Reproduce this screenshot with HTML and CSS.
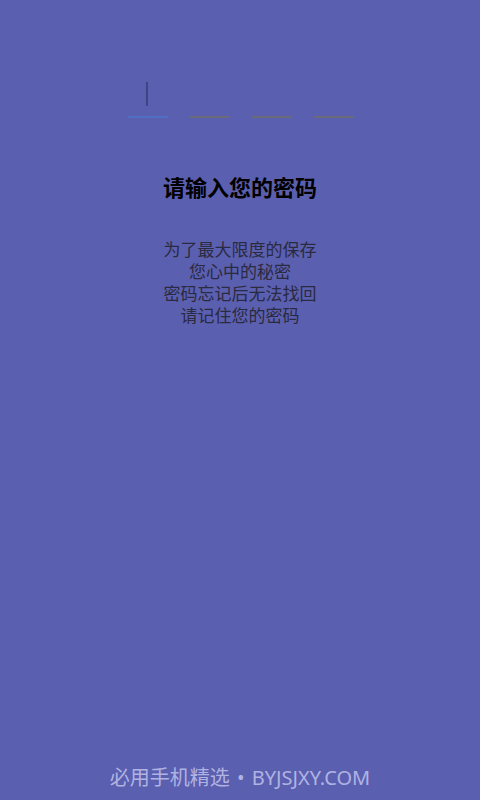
FILE: index.html
```html
<!DOCTYPE html>
<html lang="zh">
<head>
<meta charset="utf-8">
<link rel="stylesheet" href="styles.css">
</head>
<body>
<div class="screen">
  <div class="pin">
    <div class="slot active"><span class="cursor"></span></div>
    <div class="slot"></div>
    <div class="slot"></div>
    <div class="slot"></div>
  </div>
  <h1 class="title">请输入您的密码</h1>
  <div class="desc">
    <p>为了最大限度的保存</p>
    <p>您心中的秘密</p>
    <p>密码忘记后无法找回</p>
    <p>请记住您的密码</p>
  </div>
  <div class="spacer"></div>
  <div class="footer">必用手机精选 • BYJSJXY.COM</div>
</div>
</body>
</html>
```
FILE: styles.css
```css
html, body {
  margin: 0;
  padding: 0;
}
body {
  background: #5b5fb0;
  font-family: "Noto Sans CJK SC", "Noto Sans", sans-serif;
}
.screen {
  width: 480px;
  height: 800px;
  display: flex;
  flex-direction: column;
  align-items: center;
}
.pin {
  margin-top: 81px;
  display: flex;
  gap: 22px;
  margin-left: 2px;
}
.slot {
  width: 40px;
  height: 35px;
  border-bottom: 2px solid #6a6a7a;
  position: relative;
}
.slot.active {
  border-bottom-color: #4f6fc4;
}
.cursor {
  position: absolute;
  left: 18px;
  top: 1px;
  width: 2px;
  height: 24px;
  background: #3f4485;
}
.title {
  margin: 53px 0 0;
  font-size: 22px;
  font-weight: bold;
  color: #000;
  line-height: 30px;
}
.desc {
  margin-top: 37px;
  text-align: center;
  color: #2a2a40;
  font-size: 17px;
  line-height: 22px;
}
.desc p {
  margin: 0;
}
.spacer {
  flex: 1;
}
.footer {
  font-family: "Noto Sans", "Noto Sans CJK SC", sans-serif;
  color: #b0b3e2;
  font-size: 20px;
  line-height: 24px;
  margin-bottom: 10px;
  word-spacing: 2px;
}
```
